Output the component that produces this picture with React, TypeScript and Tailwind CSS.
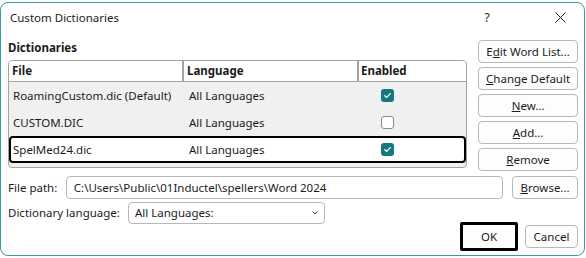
import React from "react";

const font = { fontFamily: '"Noto Sans", "Open Sans", sans-serif' };

function Check({ on }: { on: boolean }) {
  if (!on)
    return <div className="w-[13px] h-[13px] rounded-[3px] border border-[#8a8a8a] bg-white" />;
  return (
    <div className="w-[13px] h-[13px] rounded-[3px] bg-[#13797f] flex items-center justify-center">
      <svg width="9" height="9" viewBox="0 0 9 9">
        <path d="M1.8 4.7 L3.7 6.4 L7.3 2.6" fill="none" stroke="white" strokeWidth="1.3" strokeLinecap="round" strokeLinejoin="round" />
      </svg>
    </div>
  );
}

function Btn({ children, className = "" }: { children: React.ReactNode; className?: string }) {
  return (
    <div className={"h-[23px] flex items-center justify-center rounded-[4px] border border-[#b8b8b8] bg-[#fdfdfd] text-[11.5px] text-[#1b1b1b] " + className}>
      {children}
    </div>
  );
}

const rows = [
  { file: "RoamingCustom.dic (Default)", lang: "All Languages", on: true },
  { file: "CUSTOM.DIC", lang: "All Languages", on: false },
  { file: "SpelMed24.dic", lang: "All Languages", on: true, sel: true },
];

export default function App() {
  return (
    <div className="w-[586px] h-[258px] bg-white overflow-hidden pt-[2px]" style={font}>
      <div className="w-[585px] h-[254px] border border-[#3c9a9c] rounded-[8px] bg-white flex flex-col text-[#1b1b1b]">
        {/* title bar */}
        <div className="h-[29px] flex items-center pl-[9px] shrink-0">
          <div className="text-[11.5px] text-[#1b1b1b] flex-1">Custom Dictionaries</div>
          <div className="text-[12px] w-[20px] text-center mr-[58px]">?</div>
          <svg width="11" height="11" viewBox="0 0 11 11" className="mr-[18px]">
            <path d="M0.5 0.5 L10.5 10.5 M10.5 0.5 L0.5 10.5" stroke="#1b1b1b" strokeWidth="1" />
          </svg>
        </div>
        {/* main */}
        <div className="flex pl-[7px] pr-[6px]">
          <div className="w-[460px]">
            <div className="text-[11.5px] font-bold h-[28px] flex items-center pt-[3px]">Dictionaries</div>
            <div className="h-[108px] border border-[#a3a3a3] rounded-[4px] bg-[#f0f0f0] overflow-hidden">
              <div className="h-[21px] bg-white flex border-b border-[#a3a3a3] text-[11.5px] font-bold">
                <div className="w-[175px] border-r-2 border-[#a3a3a3] pl-[3px] flex items-center">File</div>
                <div className="w-[175px] border-r-2 border-[#a3a3a3] pl-[3px] flex items-center">Language</div>
                <div className="flex-1 pl-[2px] flex items-center">Enabled</div>
              </div>
              {rows.map((r) => (
                <div
                  key={r.file}
                  className={
                    "h-[27px] flex items-center text-[11.5px] " +
                    (r.sel ? "border-2 border-black rounded-[4px] bg-white" : "border-2 border-transparent")
                  }
                >
                  <div className="w-[175px] pl-[2px]">{r.file}</div>
                  <div className="w-[175px] pl-[3px]">{r.lang}</div>
                  <div className="flex-1 pl-[20px]">
                    <Check on={r.on} />
                  </div>
                </div>
              ))}
            </div>
          </div>
          <div className="ml-[11px] w-[100px] pt-[8px] flex flex-col gap-[4px]">
            <Btn>E<u>d</u>it Word List...</Btn>
            <Btn><u>C</u>hange Default</Btn>
            <Btn><u>N</u>ew...</Btn>
            <Btn><u>A</u>dd...</Btn>
            <Btn><u>R</u>emove</Btn>
          </div>
        </div>
        {/* file path */}
        <div className="flex items-center pl-[7px] pr-[6px] mt-[5px] text-[11.5px]">
          <div className="w-[58px]">File path:</div>
          <div className="w-[439px] h-[23px] border border-[#b8b8b8] rounded-[4px] flex items-center pl-[7px]">
            C:\Users\Public\01Inductel\spellers\Word 2024
          </div>
          <Btn className="ml-[9px] w-[66px]"><u>B</u>rowse...</Btn>
        </div>
        {/* dictionary language */}
        <div className="flex items-center pl-[7px] mt-[3px] text-[11.5px]">
          <div className="w-[120px]">Dictionary language:</div>
          <div className="w-[197px] h-[22px] border border-[#b8b8b8] rounded-[4px] flex items-center pl-[6px] pr-[5px]">
            <div className="flex-1">All Languages:</div>
            <svg width="8" height="6" viewBox="0 0 8 6">
              <path d="M1.5 1.5 L4 4 L6.5 1.5" fill="none" stroke="#333" strokeWidth="1" />
            </svg>
          </div>
        </div>
        {/* ok cancel */}
        <div className="flex justify-end items-center pr-[6px] mt-[-2px] text-[11.5px]">
          <div className="w-[58px] h-[29px] border-[3px] border-black rounded-[2px] flex items-center justify-center bg-[#fdfdfd]">
            OK
          </div>
          <Btn className="ml-[7px] w-[53px]">Cancel</Btn>
        </div>
      </div>
    </div>
  );
}
